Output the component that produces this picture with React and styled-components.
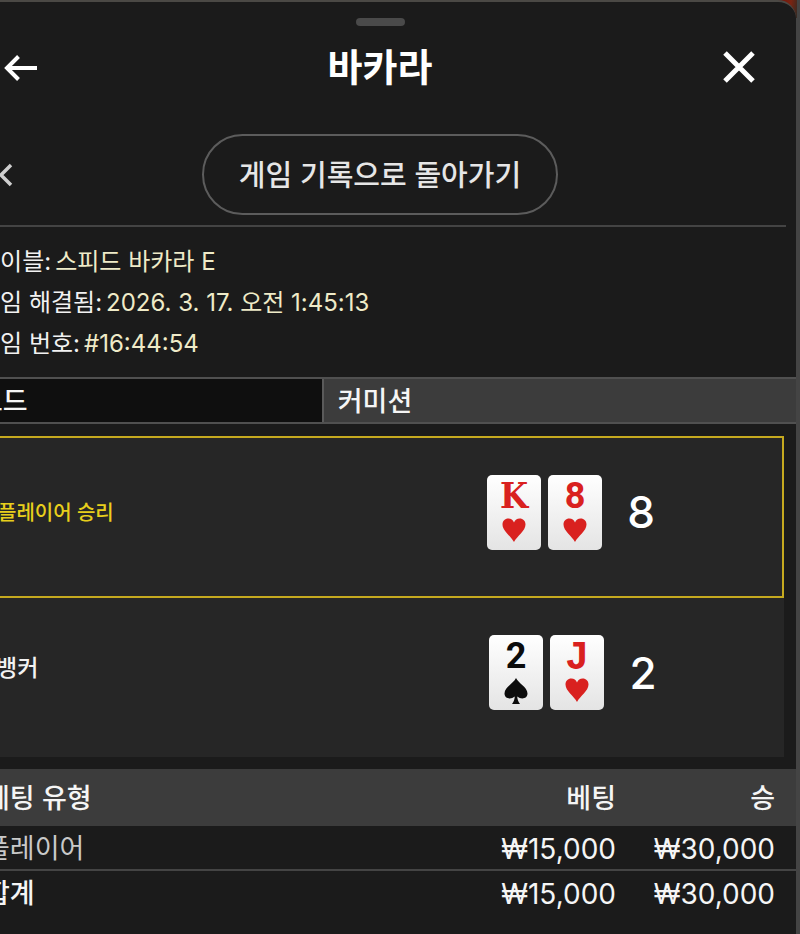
import React from 'react';
import styled, { createGlobalStyle } from 'styled-components';

const GlobalStyle = createGlobalStyle`
  *, *::before, *::after {
    box-sizing: border-box;
  }
  body {
    margin: 0;
    background-color: #1b1b1b;
    color: #f5f5f5;
    font-family: Inter, 'Noto Sans CJK KR', sans-serif;
  }
  button {
    padding: 0;
    border: 0;
    background: none;
    color: inherit;
    font: inherit;
  }
`;

const Screen = styled.div`
  min-height: 100vh;
  display: flex;
  overflow: hidden;
  background: linear-gradient(100deg, #6e0f08 0, #7a2412 16px, #3a2a22 24px) top
    right 3px / 22px 18px no-repeat #444;
`;

/* The sheet is wider than the window and slides off its left side */
const Sheet = styled.main`
  flex: 1;
  min-width: 0;
  margin: 0 4px 0 -36px;
  background-color: #1b1b1b;
  border-top: 2px solid #4b4945;
  border-top-right-radius: 18px;
`;

const Handle = styled.div`
  width: 49px;
  height: 8px;
  margin: 16px auto 0;
  border-radius: 4px;
  background-color: #4a4a4a;
`;

const TopBar = styled.header`
  display: grid;
  grid-template-columns: 1fr auto 1fr;
  align-items: center;
  height: 82px;
  padding: 0 40px;
`;

const Title = styled.h1`
  margin: 0;
  font-size: 38px;
  line-height: 48px;
  font-weight: 600;
  color: #fff;
`;

const IconButton = styled.button`
  display: flex;
  justify-self: ${(props) => props.$side || 'start'};
  color: ${(props) => props.$color || '#fff'};
`;

const HistoryBar = styled.nav`
  display: grid;
  grid-template-columns: 1fr auto 1fr;
  align-items: center;
  margin: 0 10px;
  padding: 26px 0 10px;
  border-bottom: 2px solid #444;
`;

const HistoryButton = styled.button`
  width: 356px;
  height: 81px;
  padding-bottom: 3px;
  border: 2px solid #5c5c5c;
  border-radius: 41px;
  color: #e6e6e6;
  font-size: 29px;
  font-weight: 500;
`;

const Details = styled.dl`
  margin: 0;
  padding: 14px 14px 13px;
  font-size: 24px;
  line-height: 41px;
`;

const DetailRow = styled.div`
  display: flex;
  gap: 4px;
`;

const Term = styled.dt`
  color: #f2f2f2;
`;

const Value = styled.dd`
  margin: 0;
  color: #efebc8;
`;

const Tabs = styled.div`
  display: grid;
  grid-template-columns: 43fr 57fr;
  border: solid #505050;
  border-width: 2px 0;
`;

const Tab = styled.button`
  height: 43px;
  padding: 2px 14px 0;
  text-align: left;
  font-size: 27px;
  font-weight: 500;
  line-height: 40px;
  background-color: ${(props) => (props.$active ? '#0f0f0f' : '#3c3c3c')};

  & + & {
    border-left: 2px solid #5a5a5a;
  }
`;

const Hands = styled.section`
  margin: 12px;
  background-color: #262626;
`;

const Hand = styled.div`
  display: flex;
  align-items: center;
  height: ${(props) => (props.$winner ? '162px' : '159px')};
  padding: 0 114px 10px 20px;
  border: ${(props) => (props.$winner ? '2px solid #c5a91f' : '0')};
`;

const HandName = styled.span`
  flex: 1;
  padding-bottom: ${(props) => (props.$winner ? '2px' : '14px')};
  font-size: ${(props) => (props.$winner ? '20px' : '23px')};
  font-weight: 500;
  color: ${(props) => (props.$winner ? '#e8cf1c' : '#f2f2f2')};
`;

const CardRow = styled.div`
  display: flex;
  gap: 7px;
`;

const Card = styled.div`
  display: flex;
  flex-direction: column;
  align-items: center;
  gap: 5px;
  width: 54px;
  height: 75px;
  padding-top: 2px;
  border-radius: 5px;
  background: linear-gradient(#fff, #e4e4e4);
  color: ${(props) => (props.$red ? '#d9211f' : '#0c0c0c')};
`;

const rankFonts = {
  K: "700 36px/36px 'DejaVu Serif Condensed', 'DejaVu Serif', serif",
  J: "700 40px/44px 'Liberation Mono', monospace",
};

const Rank = styled.span`
  height: 36px;
  font: ${(props) => rankFonts[props.$rank] || '700 36px/38px Roboto, sans-serif'};
`;

const Score = styled.strong`
  width: 54px;
  margin-left: 12px;
  text-align: center;
  font-size: 44px;
  font-weight: 500;
  color: #fff;
`;

const Bets = styled.table`
  width: 100%;
  border-collapse: collapse;
  font-size: 28px;
  text-align: right;
`;

const HeadRow = styled.tr`
  height: 57px;
  background-color: #3c3c3c;
`;

const BetRow = styled.tr`
  height: 44px;
  border-top: ${(props) => (props.$total ? '2px solid #444' : '0')};
`;

const HeadCell = styled.th`
  width: ${(props) => props.$width || 'auto'};
  padding: 3px 21px 0 16px;
  text-align: right;
  font-size: 27px;
  font-weight: 500;
  line-height: 40px;

  &:first-child {
    padding-left: 21px;
    text-align: left;
  }
`;

const NameCell = styled.th`
  padding: 3px 21px 0;
  text-align: left;
  font-size: 27px;
  font-weight: ${(props) => (props.$total ? 500 : 400)};
  line-height: 40px;
  color: ${(props) => (props.$total ? '#f5f5f5' : '#c9c9c9')};
`;

const MoneyCell = styled.td`
  padding: 2px 21px 0 16px;
  line-height: 40px;
`;

const details = [
  { term: '테이블', value: '스피드 바카라 E' },
  { term: '게임 해결됨', value: '2026. 3. 17. 오전 1:45:13' },
  { term: '게임 번호', value: '#16:44:54' },
];

const hands = [
  {
    name: '플레이어 승리',
    winner: true,
    score: 8,
    cards: [
      { rank: 'K', suit: 'heart' },
      { rank: '8', suit: 'heart' },
    ],
  },
  {
    name: '뱅커',
    winner: false,
    score: 2,
    cards: [
      { rank: '2', suit: 'spade' },
      { rank: 'J', suit: 'heart' },
    ],
  },
];

const bets = [
  { name: '플레이어', bet: '₩15,000', win: '₩30,000' },
  { name: '합계', bet: '₩15,000', win: '₩30,000', total: true },
];

function Suit({ suit }) {
  if (suit === 'spade') {
    return (
      <svg width="24" height="26" viewBox="0 0 24 26" fill="currentColor">
        <path d="M12 0C10 5 .5 9 .5 15.500c0 5 6 6.500 10.300 3C10.600 21.500 9.800 23.500 8 26h8c-1.800-2.500-2.600-4.500-2.800-7.500 4.300 3.500 10.300 2 10.300-3C23.500 9 14 5 12 0z" />
      </svg>
    );
  }
  return (
    <svg width="24" height="24" viewBox="0 0 24 24" fill="currentColor">
      <path d="M12 24C9 18 .5 13 .5 6.500.5 3 3 .5 6.300.5 9 .5 11 2 12 4.500 13 2 15 .5 17.700.5 21 .5 23.500 3 23.500 6.500 23.500 13 15 18 12 24z" />
    </svg>
  );
}

export default function App() {
  return (
    <Screen>
      <GlobalStyle />
      <Sheet>
        <Handle />
        <TopBar>
          <IconButton type="button" aria-label="뒤로">
            <svg width="34" height="28" viewBox="0 0 34 28" fill="none" stroke="currentColor" strokeWidth="4">
              <path d="M14.500 3.500 3 15l11.500 11.500M3 15h30" />
            </svg>
          </IconButton>
          <Title>바카라</Title>
          <IconButton type="button" aria-label="닫기" $side="end">
            <svg width="34" height="34" viewBox="0 0 34 34" fill="none" stroke="currentColor" strokeWidth="5">
              <path d="M3 3l28 28M31 3 3 31" />
            </svg>
          </IconButton>
        </TopBar>

        <HistoryBar>
          <IconButton type="button" aria-label="이전" $color="#cfcfcf">
            <svg width="40" height="24" viewBox="0 0 40 24" fill="none" stroke="currentColor" strokeWidth="3.500">
              <path d="M37 2 27 12l10 10" />
            </svg>
          </IconButton>
          <HistoryButton type="button">게임 기록으로 돌아가기</HistoryButton>
        </HistoryBar>

        <Details>
          {details.map((d) => (
            <DetailRow key={d.term}>
              <Term>{d.term}:</Term>
              <Value>{d.value}</Value>
            </DetailRow>
          ))}
        </Details>

        <Tabs role="tablist">
          <Tab type="button" role="tab" aria-selected="true" $active>
            코드
          </Tab>
          <Tab type="button" role="tab" aria-selected="false">
            커미션
          </Tab>
        </Tabs>

        <Hands>
          {hands.map((hand) => (
            <Hand key={hand.name} $winner={hand.winner}>
              <HandName $winner={hand.winner}>{hand.name}</HandName>
              <CardRow>
                {hand.cards.map((card, i) => (
                  <Card key={i} $red={card.suit === 'heart'}>
                    <Rank $rank={card.rank}>{card.rank}</Rank>
                    <Suit suit={card.suit} />
                  </Card>
                ))}
              </CardRow>
              <Score>{hand.score}</Score>
            </Hand>
          ))}
        </Hands>

        <Bets>
          <thead>
            <HeadRow>
              <HeadCell scope="col">베팅 유형</HeadCell>
              <HeadCell scope="col">베팅</HeadCell>
              <HeadCell scope="col" $width="159px">
                승
              </HeadCell>
            </HeadRow>
          </thead>
          <tbody>
            {bets.map((b) => (
              <BetRow key={b.name} $total={b.total}>
                <NameCell scope="row" $total={b.total}>
                  {b.name}
                </NameCell>
                <MoneyCell>{b.bet}</MoneyCell>
                <MoneyCell>{b.win}</MoneyCell>
              </BetRow>
            ))}
          </tbody>
        </Bets>
      </Sheet>
    </Screen>
  );
}
